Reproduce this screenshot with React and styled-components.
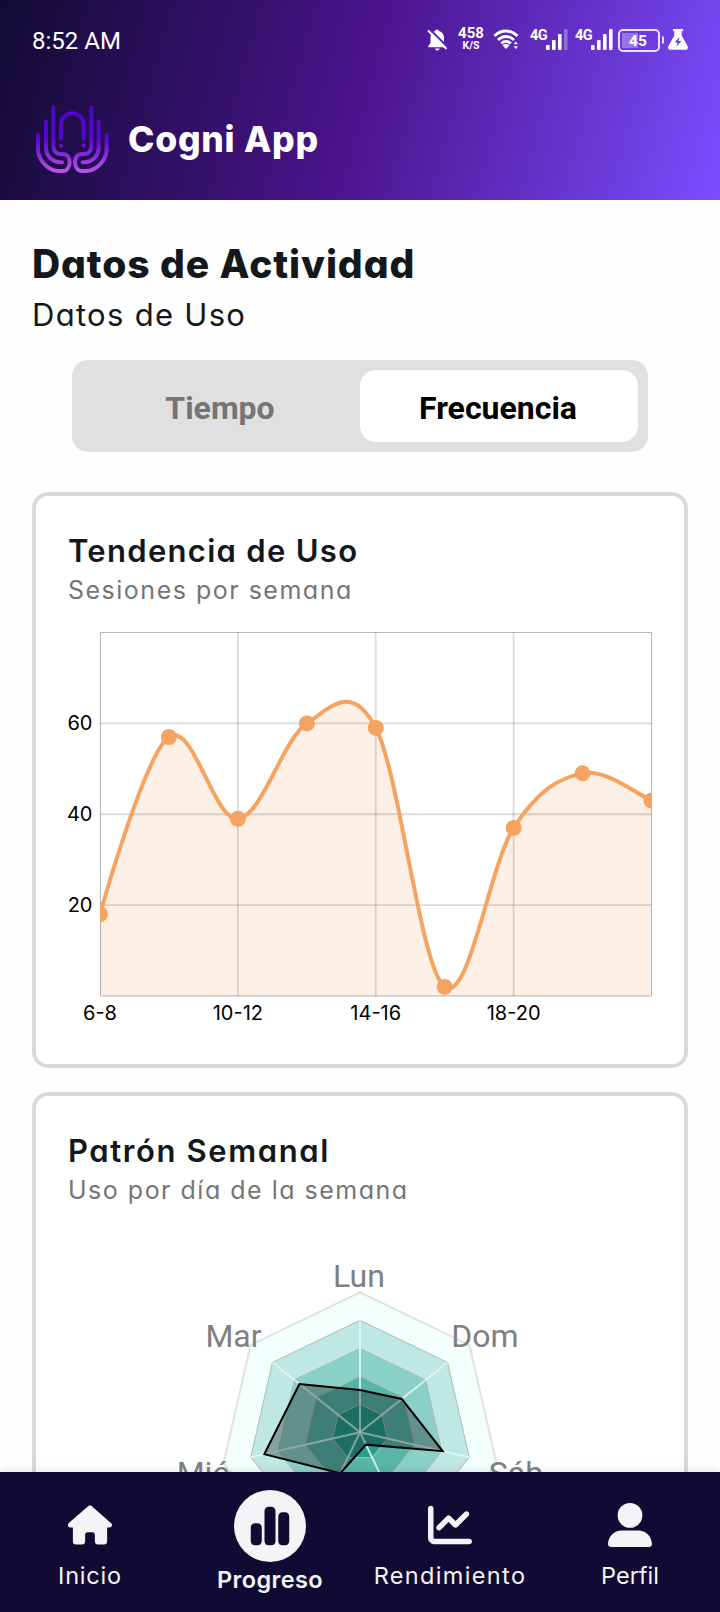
import React from "react";
import styled, { createGlobalStyle } from "styled-components";
import { FaHouse, FaChartSimple, FaChartLine, FaUserLarge } from "react-icons/fa6";

const GlobalStyle = createGlobalStyle`
  * { box-sizing: border-box; }
  body { margin: 0; background: #fff; }
`;

const brandFont = `Inter, "Open Sans", sans-serif`;
const systemFont = `Roboto, "Liberation Sans", sans-serif`;

const Screen = styled.div`
  width: 720px;
  height: 1612px;
  display: flex;
  flex-direction: column;
  overflow: hidden;
  background: #fefefe;
  font-family: ${brandFont};
  font-feature-settings: "cv11";
`;

const Header = styled.header`
  height: 200px;
  flex: none;
  color: #fff;
  background: linear-gradient(105.5deg, #110b33 0%, #4a148c 50%, #7c4dff 100%);
`;

const StatusBar = styled.div`
  height: 80px;
  padding: 0 32px;
  display: flex;
  align-items: center;
  justify-content: space-between;
  font-family: ${systemFont};
`;

const Clock = styled.span`
  font-size: 24px;
  line-height: 28px;
  padding-top: 2px;
`;

const StatusIcons = styled.div`
  display: flex;
  align-items: flex-start;
  height: 26px;
  svg { display: block; flex: none; }
`;

const NetSpeed = styled.div`
  width: 26px;
  margin: 0 9px 0 10px;
  display: flex;
  flex-direction: column;
  align-items: center;
  font-weight: 700;
  font-size: 15px;
  line-height: 13px;
  small { font-size: 10.5px; line-height: 11px; }
`;

const Signal = styled.div`
  display: flex;
  width: 37px;
  margin-left: ${(p) => p.$gap}px;
  span {
    width: 16px;
    font-size: 14.5px;
    line-height: 16px;
    font-weight: 700;
    letter-spacing: -0.6px;
    padding-top: 1px;
  }
`;

const Battery = styled.div`
  width: 42px;
  height: 23px;
  margin: 2px 1px 0 6px;
  padding-right: 2px;
  border: 2px solid #e9dfff;
  border-radius: 5px;
  display: flex;
  align-items: center;
  justify-content: center;
  font-size: 15.5px;
  font-weight: 700;
  line-height: 20px;
  background: linear-gradient(rgba(255,255,255,.3), rgba(255,255,255,.3)) 2px 2px / 16px 15px no-repeat;
`;

const BatteryTip = styled.div`
  width: 2px;
  height: 8px;
  margin: 9px 4px 0 1px;
  border-radius: 0 2px 2px 0;
  background: #e9dfff;
`;

const Brand = styled.div`
  height: 118px;
  padding-left: 32px;
  display: flex;
  align-items: center;
  gap: 16px;
`;

const AppName = styled.h1`
  margin: 2px 0 0;
  font-size: 35.5px;
  line-height: 44px;
  font-weight: 800;
  letter-spacing: 0.75px;
`;

const Content = styled.main`
  flex: 1;
  min-height: 0;
  overflow: hidden;
  padding: 36px 32px 0;
  display: flex;
  flex-direction: column;
`;

const PageTitle = styled.h2`
  margin: 0;
  flex: none;
  font-size: 39px;
  line-height: 56px;
  font-weight: 800;
  color: #14181b;
  letter-spacing: 0.9px;
`;

const PageSubtitle = styled.p`
  margin: 1px 0 0;
  flex: none;
  font-size: 31px;
  line-height: 44px;
  color: #14181b;
  letter-spacing: 1.3px;
`;

const Toggle = styled.div`
  flex: none;
  width: 576px;
  height: 92px;
  margin: 23px auto 0;
  padding: 10px;
  display: flex;
  border-radius: 16px;
  background: #e0e0e0;
  font-family: ${systemFont};
`;

const ToggleOption = styled.button`
  flex: 1;
  border: 0;
  padding: 4px 2px 0 0;
  border-radius: 16px;
  font: inherit;
  font-size: 32px;
  font-weight: 700;
  color: ${(p) => (p.$active ? "#000" : "#757575")};
  background: ${(p) => (p.$active ? "#fff" : "transparent")};
`;

const Card = styled.section`
  flex: none;
  height: ${(p) => p.$height}px;
  margin-top: ${(p) => p.$gap}px;
  padding: 33px 32px 0;
  border: 4px solid #d9d9d9;
  border-radius: 16px;
  background: #fff;
  svg { display: block; overflow: visible; }
`;

const CardTitle = styled.h3`
  margin: 0;
  font-size: 31px;
  line-height: 44px;
  font-weight: 600;
  color: #14181b;
  letter-spacing: ${(p) => p.$track || 0}px;
`;

const CardSubtitle = styled.p`
  margin: 0 0 5px;
  font-size: 25px;
  line-height: 34px;
  color: #757575;
  letter-spacing: 1.5px;
`;

const TabBar = styled.nav`
  position: relative;
  flex: none;
  height: 140px;
  display: flex;
  background: #110b33;
  box-shadow: 0 0 10px rgba(0, 0, 0, 0.12);
`;

const Tab = styled.a`
  width: 180px;
  display: flex;
  flex-direction: column;
  align-items: center;
  padding-top: ${(p) => (p.$active ? 18 : 31)}px;
  color: #f4f4f6;
`;

const TabLabel = styled.span`
  margin-top: ${(p) => (p.$active ? 2 : 13)}px;
  font-size: 23.5px;
  line-height: 32px;
  font-weight: ${(p) => (p.$active ? 600 : 400)};
  letter-spacing: ${(p) => p.$track || 0}px;
`;

const ActiveDisc = styled.div`
  width: 72px;
  height: 72px;
  border-radius: 50%;
  display: flex;
  align-items: center;
  justify-content: center;
  background: #f4f4f6;
  color: #110b33;
`;

const Logo = () => (
  <svg width="80" height="80" viewBox="0 0 240 240" fill="none">
    <defs>
      <linearGradient id="logo" gradientUnits="userSpaceOnUse" x1="0" y1="20" x2="0" y2="222">
        <stop offset="0" stopColor="#4b08c4" />
        <stop offset="0.5" stopColor="#5505cc" />
        <stop offset="1" stopColor="#c355ea" />
      </linearGradient>
    </defs>
    <g stroke="url(#logo)" strokeWidth="12" strokeLinecap="round">
      <path d="M87 118V77a34 34 0 0 1 68 0V118" />
      <path d="M87 139v2M155 139v2" strokeWidth="11" />
      {[undefined, "matrix(-1 0 0 1 242 0)"].map((t, i) => (
        <g key={i} transform={t}>
          <path d="M64 25V140C64 155 72 165 87 165H94C120 165 119 216 92 216H82C45 216 18 180 18 150V109" />
          <path d="M42 68V145C42 170 60 190 87 190H90" />
        </g>
      ))}
    </g>
  </svg>
);

const BellOff = () => (
  <svg width="21" height="24" viewBox="0 0 21 24">
    <path fill="#fff" d="M10 2.5a2 2 0 0 1 2 1.6c3.2.8 5 3.4 5 6.900V16l2.300 3v1.200H1.300V19L3.500 16v-5c0-3.600 1.600-6 4.600-6.900A2 2 0 0 1 10 2.500zM8 21.500h4.600a2.300 2 0 0 1-4.600 0z" />
    <path stroke="#5a26b4" strokeWidth="2.200" d="M3 2.500l18 18" />
    <path stroke="#fff" strokeWidth="1.800" d="M1 3.500l18.500 18.500" />
  </svg>
);

const Wifi = () => (
  <svg width="27" height="24" viewBox="0 0 27 24" fill="none" stroke="#fff" strokeWidth="2.800">
    <path d="M1.500 9C8 2.300 18 2.300 24.500 9" />
    <path d="M5 13c4.600-4.700 11.400-4.700 16 0" />
    <path d="M8.300 16.500c2.700-2.700 6.700-2.700 9.400 0" />
    <path fill="#fff" stroke="none" d="M9.500 18.200c2-1.700 5-1.700 7 0L13 22z" />
    <path fill="#fff" stroke="none" d="M20.600 17.300l2.200-2.800 2.200 2.800zM20.600 19.300l2.200 2.800 2.200-2.800z" />
  </svg>
);

const Bars = ({ weak }) => (
  <svg width="22" height="24" viewBox="0 0 22 24" fill="#fff">
    <rect x="0" y="18" width="3.600" height="5" rx="1" />
    <rect x="6" y="13" width="3.600" height="10" rx="1" />
    <rect x="12" y="7" width="3.600" height="16" rx="1" />
    <rect x="18" y="2" width="3.600" height="21" rx="1" opacity={weak ? 0.3 : 1} />
  </svg>
);

const Flask = () => (
  <svg width="20" height="24" viewBox="0 0 20 24">
    <path fill="#fff" d="M5 2h10v2.300h-1.300V8.500L19.500 19c1 2-.2 3.800-2 3.800h-15c-1.800 0-3-1.800-2-3.800L6.300 8.500V4.300H5z" />
    <path fill="#6b3de0" d="M11.500 10l-5 5.400h3L8.500 19.500l5-5.600h-3z" />
  </svg>
);

const PLOT = { left: 100, right: 651.5, top: 632.5, bottom: 996 };
const sessions = [18, 57, 39, 60, 59, 2, 37, 49, 43];
const points = sessions.map((v, i) => [
  PLOT.left + (i * (PLOT.right - PLOT.left)) / 8,
  PLOT.bottom - (v * (PLOT.bottom - PLOT.top)) / 80,
]);

function smoothPath(pts, smoothness = 0.35) {
  let d = `M${pts[0]}`;
  let t = [0, 0];
  for (let i = 1; i < pts.length; i++) {
    const prev = pts[i - 1];
    const cur = pts[i];
    const next = pts[i + 1] || cur;
    const c1 = [prev[0] + t[0], prev[1] + t[1]];
    t = [((next[0] - prev[0]) / 2) * smoothness, ((next[1] - prev[1]) / 2) * smoothness];
    d += `C${c1} ${[cur[0] - t[0], cur[1] - t[1]]} ${cur}`;
  }
  return d;
}

const TrendChart = () => {
  const line = smoothPath(points);
  const w = PLOT.right - PLOT.left;
  const h = PLOT.bottom - PLOT.top;
  return (
    <svg width="584" height="424" viewBox="68 612 584 424">
      <clipPath id="plot"><rect x={PLOT.left} y={PLOT.top} width={w} height={h} /></clipPath>
      <path d={`${line}V${PLOT.bottom}H${PLOT.left}Z`} fill="#fcefe5" />
      <g stroke="#000" strokeOpacity="0.14" strokeWidth="1.800">
        {[2, 4, 6].map((i) => (
          <path key={i} d={`M${points[i][0]} ${PLOT.top}V${PLOT.bottom}`} />
        ))}
        {[20, 40, 60].map((v) => (
          <path key={v} d={`M${PLOT.left} ${PLOT.bottom - (v * h) / 80}H${PLOT.right}`} />
        ))}
      </g>
      <rect x={PLOT.left + 0.5} y={PLOT.top} width={w - 0.5} height={h} fill="none" stroke="#000" strokeOpacity="0.28" strokeWidth="1" />
      <g clipPath="url(#plot)">
        <path d={line} fill="none" stroke="#f4a460" strokeWidth="4" />
        {points.map(([x, y]) => <circle key={x} cx={x} cy={y} r="8" fill="#f4a460" />)}
      </g>
      <g fontSize="20" fill="#000" fontFamily={brandFont}>
        {[20, 40, 60].map((v) => (
          <text key={v} x="92.500" y={PLOT.bottom - (v * h) / 80 + 7} textAnchor="end">{v}</text>
        ))}
        {["6-8", "10-12", "14-16", "18-20"].map((t, i) => (
          <text key={t} x={points[i * 2][0]} y="1019.500" textAnchor="middle">{t}</text>
        ))}
      </g>
    </svg>
  );
};

const CENTER = [360, 1432.3];
const vertex = (i, r) => {
  const a = (i * 2 * Math.PI) / 7;
  return [CENTER[0] - r * Math.sin(a), CENTER[1] - r * Math.cos(a)];
};
const heptagon = (radii) => radii.map((r, i) => vertex(i, r).join(",")).join(" ");
const rings = [
  [140, "#f2fffd"],
  [112, "#c0e8e2"],
  [84, "#8bd0c6"],
  [56, "#58b6a9"],
  [28, "#26a08c"],
];
const weekday = [42.3, 77.5, 98.1, 45.5, 13.7, 84.8, 53.4];
const dayLabels = [
  ["Lun", 359, 1287],
  ["Mar", 233.5, 1347],
  ["Dom", 485, 1347],
  ["Mié", 203, 1483.5],
  ["Sáb", 516, 1483.5],
];

const WeekRadar = () => (
  <svg width="584" height="400" viewBox="68 1212 584 400">
    {rings.map(([r, fill]) => (
      <polygon key={r} points={heptagon(Array(7).fill(r))} fill={fill} stroke={r === 140 ? "#dfe3e2" : "#a9bcb9"} strokeWidth={r === 140 ? 2 : 1} />
    ))}
    {weekday.map((_, i) => {
      const [x, y] = vertex(i, 112);
      return <path key={i} d={`M${CENTER}L${x} ${y}`} stroke="#dff7f3" strokeOpacity="0.85" strokeWidth="2" />;
    })}
    <polygon points={heptagon(weekday)} fill="#000" fillOpacity="0.3" stroke="#000" strokeWidth="2" />
    <g fontSize="32" fill="#808080" fontFamily={systemFont} textAnchor="middle">
      {dayLabels.map(([t, x, y]) => <text key={t} x={x} y={y}>{t}</text>)}
    </g>
  </svg>
);

const tabs = [
  { label: "Inicio", Icon: FaHouse, track: 0.8 },
  { label: "Progreso", Icon: FaChartSimple, active: true, track: 0.4 },
  { label: "Rendimiento", Icon: FaChartLine, track: 1.35 },
  { label: "Perfil", Icon: FaUserLarge, track: 0 },
];

export default function App() {
  return (
    <Screen>
      <GlobalStyle />
      <Header>
        <StatusBar>
          <Clock>8:52 AM</Clock>
          <StatusIcons>
            <BellOff />
            <NetSpeed>458<small>K/S</small></NetSpeed>
            <Wifi />
            <Signal $gap={10}><span>4G</span><Bars weak /></Signal>
            <Signal $gap={8}><span>4G</span><Bars /></Signal>
            <Battery>45</Battery>
            <BatteryTip />
            <Flask />
          </StatusIcons>
        </StatusBar>
        <Brand>
          <Logo />
          <AppName>Cogni App</AppName>
        </Brand>
      </Header>
      <Content>
        <PageTitle>Datos de Actividad</PageTitle>
        <PageSubtitle>Datos de Uso</PageSubtitle>
        <Toggle>
          <ToggleOption>Tiempo</ToggleOption>
          <ToggleOption $active>Frecuencia</ToggleOption>
        </Toggle>
        <Card $height={576} $gap={40}>
          <CardTitle $track={1.3}>Tendencia de Uso</CardTitle>
          <CardSubtitle>Sesiones por semana</CardSubtitle>
          <TrendChart />
        </Card>
        <Card $height={576} $gap={24}>
          <CardTitle $track={1.6}>Patrón Semanal</CardTitle>
          <CardSubtitle>Uso por día de la semana</CardSubtitle>
          <WeekRadar />
        </Card>
      </Content>
      <TabBar>
        {tabs.map(({ label, Icon, active, track }) => (
          <Tab key={label} $active={active}>
            {active ? <ActiveDisc><Icon size={44} /></ActiveDisc> : <Icon size={44} />}
            <TabLabel $active={active} $track={track}>{label}</TabLabel>
          </Tab>
        ))}
      </TabBar>
    </Screen>
  );
}
